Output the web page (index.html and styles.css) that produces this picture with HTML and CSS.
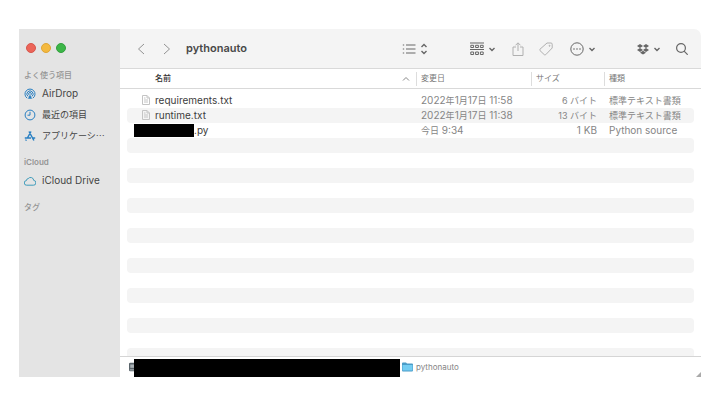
FILE: index.html
```html
<!DOCTYPE html>
<html lang="ja">
<head>
<meta charset="utf-8">
<title>pythonauto</title>
<link rel="stylesheet" href="styles.css">
</head>
<body>
<div class="window">
  <aside class="sidebar">
    <div class="lights">
      <button class="light red" aria-label="閉じる"></button>
      <button class="light yellow" aria-label="しまう"></button>
      <button class="light green" aria-label="拡大"></button>
    </div>
    <nav class="places">
      <h2>よく使う項目</h2>
      <a href="#"><svg viewBox="0 0 12 12"><path d="M3.2 10.2A5 5 0 1 1 8.8 10.2M4 8.4a3.1 3.1 0 1 1 4 0M5 6.9a1.4 1.4 0 1 1 2 0"/><path class="solid" d="M6 6.2l2 4.6H4z"/></svg><span>AirDrop</span></a>
      <a href="#"><svg viewBox="0 0 12 12"><circle cx="6" cy="6" r="4.9"/><path d="M6 2.8V6.2H3.5"/></svg><span class="ja">最近の項目</span></a>
      <a href="#"><svg viewBox="0 0 12 12"><path class="heavy" d="M5 1.5l4.9 9M7 1.5L3.4 8M.8 8H7M9 8h2.2M2.3 9.7l-.6 1"/></svg><span class="ja">アプリケーシ…</span></a>
    </nav>
    <nav class="places">
      <h2 class="latin">iCloud</h2>
      <a href="#"><svg class="cloud" viewBox="0 0 12 12"><path d="M2.700 10.200a2.300 2.300 0 0 1-.3-4.600 2 2 0 0 1 1.800-2 3.100 3.100 0 0 1 5.500 1.800A2.400 2.400 0 0 1 9.300 10.200z"/></svg><span>iCloud Drive</span></a>
    </nav>
    <nav class="places">
      <h2>タグ</h2>
    </nav>
  </aside>
  <main class="content">
    <header class="toolbar">
      <div class="history">
        <button aria-label="戻る"><svg class="arrow" viewBox="0 0 8 12"><path d="M7 1L1.500 6 7 11"/></svg></button>
        <button aria-label="進む"><svg class="arrow" viewBox="0 0 8 12"><path d="M1 1l5.500 5L1 11"/></svg></button>
      </div>
      <h1>pythonauto</h1>
      <div class="tools">
        <button class="view" aria-label="リスト表示"><svg class="w14" viewBox="0 0 14 12"><path d="M4 2h9.500M4 6h9.500M4 10h9.500M.8 2h1.400M.8 6h1.400M.8 10h1.400"/></svg><svg class="w8 bold" viewBox="0 0 8 12"><path d="M1.500 4L4 1.500 6.500 4M1.500 8L4 10.500 6.500 8"/></svg></button>
        <button class="group" aria-label="グループ分け"><svg class="w14" viewBox="0 0 14 14"><path d="M0 1h14M0 7.500h14"/><path d="M.8 3.300h2.800v2.200H.8zM5.600 3.300h2.800v2.200H5.600zM10.400 3.300h2.800v2.200h-2.800zM.8 10h2.800v2.500H.8zM5.600 10h2.800v2.500H5.600zM10.400 10h2.800v2.500h-2.800z"/></svg><svg class="w8 bold" viewBox="0 0 8 12"><path d="M1.500 5L4 7.500 6.500 5"/></svg></button>
        <button class="share pale" aria-label="共有"><svg class="tall" viewBox="0 0 12 14"><path d="M4 5H1v8.500h10V5H8M6 9V1M3.500 3.300L6 .8l2.500 2.500"/></svg></button>
        <button class="tag pale" aria-label="タグ"><svg class="w14" viewBox="0 0 14 14"><path d="M8 1h4q1.200 0 1.200 1.200V6L6.700 12.700q-.7.6-1.400 0L1 8.600q-.6-.7 0-1.400z"/><circle cx="10.600" cy="3.800" r=".5"/></svg></button>
        <button class="more" aria-label="アクション"><svg class="w14" viewBox="0 0 14 14"><circle cx="7" cy="7" r="6.200"/><path class="dots" d="M4 7h.01M7 7h.01M10 7h.01"/></svg><svg class="w8 bold" viewBox="0 0 8 12"><path d="M1.500 5L4 7.500 6.500 5"/></svg></button>
        <button class="dropbox" aria-label="Dropbox"><svg class="w12" viewBox="0 0 12 12"><path class="solid" d="M3 1l3 2-3 2-3-2zM9 1l3 2-3 2-3-2zM3 5l3 2-3 2-3-2zM9 5l3 2-3 2-3-2zM6 7.800l3 1.900-3 1.900-3-1.900z"/></svg><svg class="w8 bold" viewBox="0 0 8 12"><path d="M1.500 5L4 7.500 6.500 5"/></svg></button>
        <button class="search" aria-label="検索"><svg class="w12 lens" viewBox="0 0 12 12"><circle cx="5" cy="5" r="4.400"/><path d="M8.100 8.100L11.700 11.700"/></svg></button>
      </div>
    </header>
    <div class="list">
      <table>
        <colgroup><col><col class="c-date"><col class="c-size"><col class="c-kind"></colgroup>
        <thead>
          <tr>
            <th class="name"><button>名前<svg viewBox="0 0 8 6"><path d="M1 4.500l3-3 3 3"/></svg></button></th>
            <th><button>変更日</button></th>
            <th><button>サイズ</button></th>
            <th><button>種類</button></th>
          </tr>
        </thead>
        <tbody>
          <tr><td class="name"><svg class="doc" viewBox="0 0 8 10"><path d="M.5.5h4.500l2.500 2.500v6.500h-7zM5 .5V3h2.500M2 3h1.500M2 5h4M2 7h4"/></svg>requirements.txt</td><td>2022<span class="ja">年</span>1<span class="ja">月</span>17<span class="ja">日</span> 11:58</td><td class="size ja">6 バイト</td><td class="ja">標準テキスト書類</td></tr>
          <tr><td class="name"><svg class="doc" viewBox="0 0 8 10"><path d="M.5.5h4.500l2.500 2.500v6.500h-7zM5 .5V3h2.500M2 3h1.500M2 5h4M2 7h4"/></svg>runtime.txt</td><td>2022<span class="ja">年</span>1<span class="ja">月</span>17<span class="ja">日</span> 11:38</td><td class="size ja">13 バイト</td><td class="ja">標準テキスト書類</td></tr>
          <tr><td class="name masked"><span class="mask"></span>.py</td><td><span class="ja">今日</span> 9:34</td><td class="size">1 KB</td><td>Python source</td></tr>
          <tr><td></td><td></td><td></td><td></td></tr>
          <tr><td></td><td></td><td></td><td></td></tr>
          <tr><td></td><td></td><td></td><td></td></tr>
          <tr><td></td><td></td><td></td><td></td></tr>
          <tr><td></td><td></td><td></td><td></td></tr>
          <tr><td></td><td></td><td></td><td></td></tr>
          <tr><td></td><td></td><td></td><td></td></tr>
          <tr><td></td><td></td><td></td><td></td></tr>
          <tr><td></td><td></td><td></td><td></td></tr>
          <tr><td></td><td></td><td></td><td></td></tr>
          <tr><td></td><td></td><td></td><td></td></tr>
          <tr><td></td><td></td><td></td><td></td></tr>
          <tr><td></td><td></td><td></td><td></td></tr>
          <tr><td></td><td></td><td></td><td></td></tr>
          <tr><td></td><td></td><td></td><td></td></tr>
        </tbody>
      </table>
    </div>
    <footer class="path">
      <svg class="disk" viewBox="0 0 6 10"><rect width="8" height="10" rx="1.500" fill="#59636a"/><path d="M1.500 2h4.500v4H1.500z" fill="#a9b0b4"/><path d="M1 8h5v1H1z" fill="#c9ced1"/></svg>
      <span class="path-mask"></span>
      <svg class="folder" viewBox="0 0 11 10"><path d="M0 1.500Q0 .5 1 .5h3l1 1h5q1 0 1 1V8.500q0 1-1 1H1q-1 0-1-1z" fill="#4a9cc7"/><path d="M.5 3h10v5.500H.5z" fill="#74cdf2"/></svg>
      <span>pythonauto</span>
      <svg class="grip" viewBox="0 0 6 6"><path d="M6 1v5H1z" fill="#aaa"/></svg>
    </footer>
  </main>
</div>
</body>
</html>
```

FILE: styles.css
```css
* { box-sizing: border-box; }

body {
  margin: 0;
  height: 100vh;
  padding: 29px 19px 28px;
  background: #fff;
  color: #444;
  font: 10px/15px Inter, "Noto Sans CJK JP", sans-serif;
}

svg { display: block; flex: none; fill: none; stroke: currentColor; }
.solid { fill: currentColor; stroke: none; }
button { padding: 0; border: 0; background: none; color: inherit; font: inherit; }

/* Japanese glyphs fill their box, so they are set a step smaller than Latin */
.ja { font-size: 9px; }

.window { display: flex; height: 100%; }

/* Sidebar */
.sidebar { flex: none; width: 101px; padding: 14px 12px 0 5px; background: #e4e4e4; }
.lights { display: flex; gap: 5px; padding-left: 2px; margin-bottom: 17px; }
.light { width: 10px; height: 10px; border-radius: 50%; }
.red { background: #ec6559; border: 1px solid #d7564c; }
.yellow { background: #f4b93f; border: 1px solid #dfa536; }
.green { background: #3cb648; border: 1px solid #32a03d; }
.places { margin-bottom: 11px; }
.places h2 { margin: 0 0 2px; color: #949494; font-size: 8px; font-weight: 500; line-height: 11px; }
.places .latin { font-weight: 600; }
.places a { display: flex; align-items: center; gap: 6px; height: 21px; color: #444; text-decoration: none; }
.places a span { flex: 1; white-space: nowrap; }
.places .ja { font-family: "Noto Sans CJK JP", sans-serif; }
.places svg { width: 12px; height: 12px; color: #287fc2; }
.places svg.cloud { color: #3e9bbb; }
.heavy { stroke-width: 1.5; }

/* Toolbar */
.content { flex: 1; min-width: 0; display: flex; flex-direction: column; }
.toolbar {
  flex: none; display: flex; align-items: center; height: 40px; padding: 0 13px 0 17px;
  border-bottom: 1px solid #d9d9d9; border-top-right-radius: 7px; background: #f4f4f4;
}
.history { display: flex; gap: 18px; margin-right: 15px; color: #929292; }
.arrow { width: 8px; height: 12px; }
h1 { flex: 1; margin: 0; color: #484848; font-size: 11px; font-weight: 600; line-height: 15px; }
.tools { display: flex; align-items: center; color: #666; }
.tools button { display: flex; align-items: center; gap: 4px; }
.tools .view { margin-right: 42px; }
.tools .group { margin-right: 16px; }
.tools .share { margin-right: 15px; }
.tools .tag { margin-right: 17px; }
.tools .more { margin-right: 41px; }
.tools .dropbox { margin-right: 15px; }
.tools .pale { color: #b0b0b0; }
.w8 { width: 8px; height: 12px; }
.w12 { width: 12px; height: 12px; }
.w14 { width: 14px; height: 14px; }
.tall { width: 12px; height: 14px; }
.bold { stroke-width: 1.4; }
.lens { stroke-width: 1.2; }
.dots { stroke-width: 1.6; stroke-linecap: round; }

/* File list */
.list { flex: 1; min-height: 0; overflow: hidden; }
table { width: 100%; table-layout: fixed; border-collapse: separate; border-spacing: 0; }
.c-date { width: 115px; }
.c-size { width: 73px; }
.c-kind { width: 97px; }
th { height: 20px; padding: 0; border-bottom: 1px solid #d9d9d9; font-size: 8px; font-weight: 400; color: #777; text-align: left; }
th button { display: flex; align-items: center; width: 100%; height: 14px; padding-left: 4px; border-left: 1px solid #ddd; }
th.name button { justify-content: space-between; padding: 0 6px 0 35px; border: 0; color: #333; font-weight: 500; }
th svg { width: 8px; height: 6px; color: #888; }
tbody::before { content: ""; display: block; height: 4px; }
td { height: 15px; padding: 0 0 0 5px; color: #858585; white-space: nowrap; vertical-align: middle; }
tr:nth-child(even) td { background-color: #f4f4f4; }
td.size { padding-right: 7px; text-align: right; }
td.name { padding-left: 15px; color: #3c3c3c; }
td:first-child { border-left: 7px solid transparent; border-radius: 11px 0 0 11px / 4px; background-clip: padding-box; }
td:last-child { border-right: 7px solid transparent; border-radius: 0 11px 11px 0 / 4px; background-clip: padding-box; }
.doc { display: inline-block; width: 8px; height: 10px; margin-right: 5px; color: #c4c4c4; vertical-align: -1px; }
td.masked { padding-left: 7px; }
.mask { display: inline-block; width: 60px; height: 13px; background: #000; vertical-align: -3px; }

/* Path bar */
.path { flex: none; display: flex; align-items: center; height: 21px; padding-left: 9px; border-top: 1px solid #d5d5d5; color: #858585; font-size: 8px; }
.path svg { stroke: none; }
.disk { width: 5px; height: 10px; }
.path-mask { width: 266px; height: 18px; align-self: flex-end; background: #000; }
.folder { width: 11px; height: 10px; margin: 0 3px 0 2px; }
.path .grip { width: 6px; height: 6px; align-self: flex-end; margin-left: auto; }
```
